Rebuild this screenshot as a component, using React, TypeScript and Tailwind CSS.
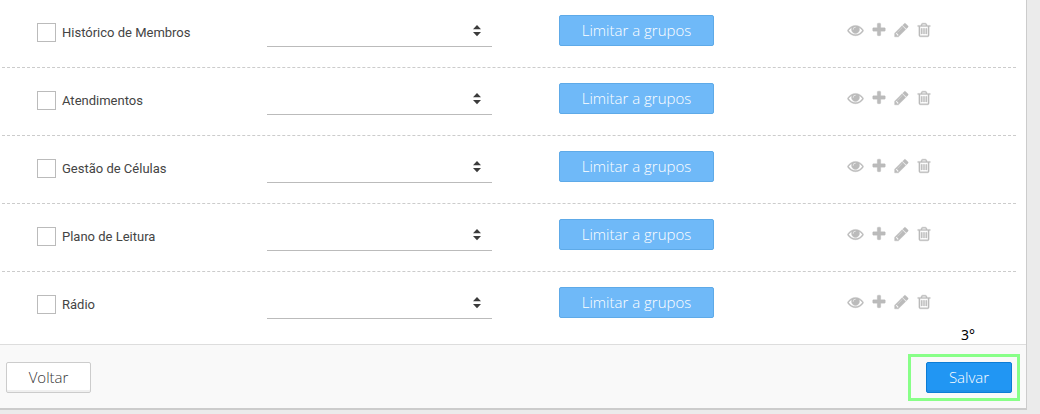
import type { ReactNode } from 'react';

const modules = [
  { id: 'historico', name: 'Histórico de Membros' },
  { id: 'atendimentos', name: 'Atendimentos' },
  { id: 'celulas', name: 'Gestão de Células' },
  { id: 'leitura', name: 'Plano de Leitura' },
  { id: 'radio', name: 'Rádio' },
];

const actions = [
  {
    label: 'Visualizar',
    width: 'w-[17px]',
    viewBox: '0 0 1792 1792',
    path: 'M1664 960q-152-236-381-353 61 104 61 225 0 185-131.5 316.5t-316.5 131.5-316.5-131.5-131.5-316.5q0-121 61-225-229 117-381 353 133 205 333.5 326.5t434.5 121.5 434.5-121.5 333.5-326.5zm-720-384q0-20-14-34t-34-14q-125 0-214.5 89.5t-89.5 214.5q0 20 14 34t34 14 34-14 14-34q0-86 61-147t147-61q20 0 34-14t14-34zm848 384q0 34-20 69-140 230-376.5 368.5t-499.5 138.5-499.5-139-376.5-368q-20-35-20-69t20-69q140-229 376.5-368t499.5-139 499.5 139 376.5 368q20 35 20 69z',
  },
  {
    label: 'Adicionar',
    width: 'w-[14px]',
    viewBox: '112 0 1568 1792',
    path: 'M1600 736v192q0 40-28 68t-68 28h-416v416q0 40-28 68t-68 28h-192q-40 0-68-28t-28-68v-416h-416q-40 0-68-28t-28-68v-192q0-40 28-68t68-28h416v-416q0-40 28-68t68-28h192q40 0 68 28t28 68v416h416q40 0 68 28t28 68z',
  },
  {
    label: 'Editar',
    width: 'w-[15px]',
    viewBox: '112 0 1568 1792',
    path: 'M491 1536l91-91-235-235-91 91v107h128v128h107zm523-928q0-22-22-22-10 0-17 7l-542 542q-7 7-7 17 0 22 22 22 10 0 17-7l542-542q7-7 7-17zm-54-192l416 416-832 832h-416v-416zm683 96q0 53-37 90l-166 166-416-416 166-165q36-38 90-38 53 0 91 38l235 234q37 39 37 91z',
  },
  {
    label: 'Excluir',
    width: 'w-[14px]',
    viewBox: '112 0 1568 1792',
    path: 'M704 736v576q0 14-9 23t-23 9h-64q-14 0-23-9t-9-23v-576q0-14 9-23t23-9h64q14 0 23 9t9 23zm256 0v576q0 14-9 23t-23 9h-64q-14 0-23-9t-9-23v-576q0-14 9-23t23-9h64q14 0 23 9t9 23zm256 0v576q0 14-9 23t-23 9h-64q-14 0-23-9t-9-23v-576q0-14 9-23t23-9h64q14 0 23 9t9 23zm128 724v-948h-896v948q0 22 7 40.5t14.5 27 10.5 8.5h832q3 0 10.5-8.5t14.5-27 7-40.5zm-672-1076h448l-48-117q-7-9-17-11h-317q-10 2-17 11zm928 32v64q0 14-9 23t-23 9h-96v948q0 83-47 143.5t-113 60.5h-832q-66 0-113-58.5t-47-141.5v-952h-96q-14 0-23-9t-9-23v-64q0-14 9-23t23-9h309l70-167q15-37 54-63t79-26h320q40 0 79 26t54 63l70 167h309q14 0 23 9t9 23z',
  },
];

function LevelSelect({ label }: { label: string }) {
  return (
    <div className="relative w-[225px] mt-3">
      <select
        aria-label={label}
        defaultValue=""
        className="block w-full h-[35px] appearance-none border-b border-[#bbb] bg-transparent pl-2 pr-6 text-[13px] text-[#444] outline-none"
      >
        <option value=""></option>
        <option value="leitura">Leitura</option>
        <option value="total">Total</option>
      </select>
      <svg
        viewBox="0 0 8 12"
        className="pointer-events-none absolute right-[11px] top-[13px] w-2 h-3 fill-[#3b3b3b]"
        aria-hidden="true"
      >
        <path d="M4 0L8 4.2H0zM4 11.2L0 7h8z" />
      </svg>
    </div>
  );
}

function ModuleRow({ id, name }: { id: string; name: string }) {
  return (
    <li className="grid grid-cols-[230fr_292fr_288fr_169fr] items-start h-[68px] pl-[35px] border-b border-dashed border-[#ccc] last:border-transparent">
      <div className="flex items-center gap-1.5 pt-[23px]">
        <input
          id={id}
          type="checkbox"
          className="size-[19px] shrink-0 appearance-none border border-[#bbb] bg-white checked:bg-[#2196f3]"
        />
        <label htmlFor={id} className="text-[13px] leading-[19px] text-[#444]">
          {name}
        </label>
      </div>
      <LevelSelect label={`Nível de acesso: ${name}`} />
      <div className="pt-[15px]">
        <button
          type="button"
          className="block w-[155px] h-[31px] pb-0.5 rounded-xs border border-[#5eaae8] bg-[#6fb9f8] font-['Open_Sans',sans-serif] text-[15px] leading-5 font-light text-white"
        >
          Limitar a grupos
        </button>
      </div>
      <div className="flex gap-2 pt-[22px] text-[#bbb]">
        {actions.map((action) => (
          <button key={action.label} type="button" aria-label={`${action.label} ${name}`}>
            <svg
              viewBox={action.viewBox}
              className={`${action.width} h-4 fill-current stroke-current stroke-[40]`}
              aria-hidden="true"
            >
              <path d={action.path} />
            </svg>
          </button>
        ))}
      </div>
    </li>
  );
}

// Green frame and step number drawn over the save button
function Step({ number, children }: { number: string; children: ReactNode }) {
  return (
    <div className="relative">
      {children}
      <div className="pointer-events-none absolute -inset-y-2 -left-[18px] -right-2 border-3 border-[#88ff88]" />
      <span className="absolute left-[35px] -top-9 font-['Noto_Sans',sans-serif] text-sm leading-[18px] font-normal text-black">
        {number}
      </span>
    </div>
  );
}

export default function App() {
  return (
    <div className="min-h-screen bg-[#ebebeb] pr-[13px] font-[Roboto,sans-serif]">
      <form className="border-r border-b-2 border-[#ccc] bg-white" onSubmit={(e) => e.preventDefault()}>
        <ul className="pl-0.5 pr-[10px] pb-1">
          {modules.map((module) => (
            <ModuleRow key={module.id} {...module} />
          ))}
        </ul>
        <div className="flex items-start justify-between border-t border-[#ddd] bg-[#f9f9f9] pt-[17px] pb-[15px] pl-1.5 pr-[14px] font-['Open_Sans',sans-serif] text-[15px] leading-5 font-light">
          <button
            type="button"
            className="w-[85px] h-[31px] pb-0.5 rounded-xs border border-[#ccc] bg-white text-[#333] shadow-[inset_0_-2px_0_#f0f0f0]"
          >
            Voltar
          </button>
          <Step number="3°">
            <button
              type="submit"
              className="block w-[86px] h-[31px] pb-0.5 rounded-xs border border-[#0c7cd5] bg-[#2196f3] text-white shadow-[inset_0_-2px_0_#1f8ee6]"
            >
              Salvar
            </button>
          </Step>
        </div>
      </form>
    </div>
  );
}
